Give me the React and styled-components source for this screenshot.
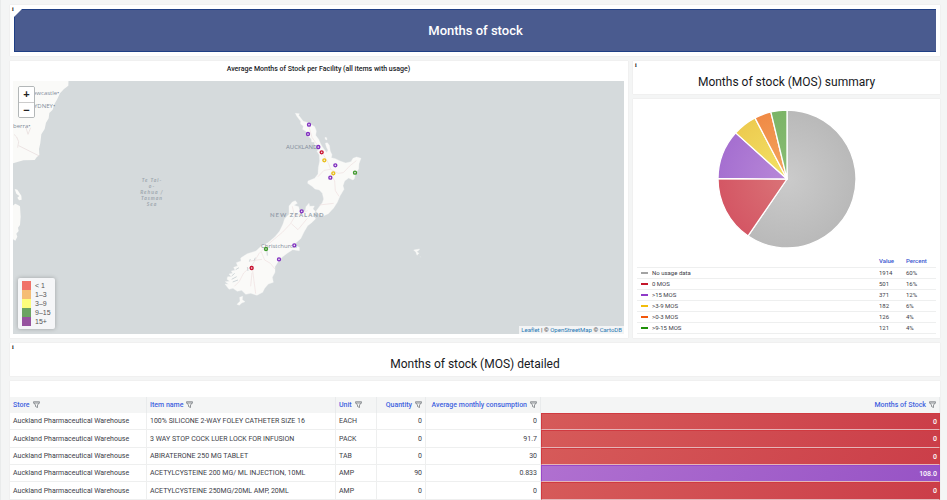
// importing dependencies
import React from 'react'
import styled, { createGlobalStyle } from 'styled-components'

// data
const summary = [
  { label: 'No usage data', value: 1914, percent: '60%', line: '#a3a3a3', inner: '#cbcbcb', outer: '#b9b9b9' },
  { label: '0 MOS', value: 501, percent: '16%', line: '#c4162a', inner: '#da7377', outer: '#d45664' },
  { label: '>15 MOS', value: 371, percent: '12%', line: '#8f3bc8', inner: '#b888d8', outer: '#a56fd0' },
  { label: '>3-9 MOS', value: 182, percent: '6%', line: '#f2bd0b', inner: '#f3e366', outer: '#edcb50' },
  { label: '>0-3 MOS', value: 126, percent: '4%', line: '#f2570c', inner: '#f3a660', outer: '#f08a45' },
  { label: '>9-15 MOS', value: 121, percent: '4%', line: '#1f9108', inner: '#8abd75', outer: '#7bb466' },
]

const columns = [
  { name: 'Store', width: 137 },
  { name: 'Item name', width: 189 },
  { name: 'Unit', width: 41 },
  { name: 'Quantity', width: 49, right: true },
  { name: 'Average monthly consumption', width: 115, right: true },
  { name: 'Months of Stock', right: true },
]

const stock = [
  { item: '100% SILICONE 2-WAY FOLEY CATHETER SIZE 16', unit: 'EACH', quantity: '0', amc: '0', mos: '0' },
  { item: '3 WAY STOP COCK LUER LOCK FOR INFUSION', unit: 'PACK', quantity: '0', amc: '91.7', mos: '0' },
  { item: 'ABIRATERONE 250 MG TABLET', unit: 'TAB', quantity: '0', amc: '30', mos: '0' },
  { item: 'ACETYLCYSTEINE 200 MG/ ML INJECTION, 10ML', unit: 'AMP', quantity: '90', amc: '0.833', mos: '108.0', over: true },
  { item: 'ACETYLCYSTEINE 250MG/20ML AMP, 20ML', unit: 'AMP', quantity: '0', amc: '0', mos: '0' },
]

const ranges = [
  { label: '< 1', color: '#f07168' },
  { label: '1–3', color: '#f5bd74' },
  { label: '3–9', color: '#fdfd7c' },
  { label: '9–15', color: '#6ba362' },
  { label: '15+', color: '#96529f' },
]

const facilities = [
  [267, 104, '#8030c0'],
  [264, 132, '#8030c0'],
  [295, 171, '#8030c0'],
  [305, 187, '#c8102e'],
  [313, 211, '#eabf15'],
  [346, 226, '#8030c0'],
  [340, 250, '#eabf15'],
  [331, 263, '#8030c0'],
  [405, 248, '#3f9a2c'],
  [245, 364, '#8030c0'],
  [223, 466, '#8030c0'],
  [138, 477, '#3f9a2c'],
  [177, 508, '#8030c0'],
  [95, 534, '#c8102e'],
]

// styled components
const GlobalStyle = createGlobalStyle`
  * {
    box-sizing: border-box;
  }

  body {
    margin: 0;
    background-color: #f4f5f5;
    font-family: Roboto, 'Liberation Sans', sans-serif;
    font-size: 7px;
    color: #3c4048;
    overflow: hidden;
  }
`

const Dashboard = styled.main`
  display: flex;
  flex-direction: column;
  gap: 5px;
  padding: 5px 7px 0 9px;
  border-left: 1px solid #e9ebeb;
`

const Columns = styled.div`
  display: grid;
  grid-template-columns: 618fr 307fr;
  gap: 5px;
`

const Side = styled.div`
  display: flex;
  flex-direction: column;
  gap: 5px;
`

const Panel = styled.section`
  position: relative;
  background-color: white;
  box-shadow: 0 0 1px #d8dadc;
`

const Info = styled.span`
  position: absolute;
  z-index: 1;
  top: 0;
  left: 2px;
  font: bold 6px/8px 'Liberation Serif', serif;
  color: #111;
`

const BannerPanel = styled(Panel)`
  padding: 4px;
`

const Banner = styled.h1`
  position: relative;
  margin: 0;
  padding: 11px 0;
  border: 1px solid #1f3f85;
  border-right: none;
  background-color: #4a5b8f;
  color: white;
  font-size: 13px;
  font-weight: 500;
  line-height: 19px;
  text-align: center;

  &::before {
    content: '';
    position: absolute;
    top: -1px;
    left: -1px;
    border: 4px solid transparent;
    border-top-color: white;
    border-left-color: white;
  }
`

const Heading = styled.h2`
  margin: 0;
  padding: 13px 0 4px;
  color: #17191d;
  font-size: 12px;
  font-weight: 400;
  line-height: 16px;
  text-align: center;
`

const MapPanel = styled(Panel)`
  display: flex;
  flex-direction: column;
  padding: 0 4px 4px 3px;
`

const MapTitle = styled.h2`
  margin: 0;
  padding: 2px 0 6px;
  color: #202226;
  font-size: 7px;
  font-weight: 500;
  line-height: 12px;
  text-align: center;
`

const MapArea = styled.div`
  position: relative;
  height: 253px;
  background-color: #d5dadc;
  overflow: hidden;

  svg {
    display: block;
    width: 100%;
    height: 100%;
  }
`

const ZoomControl = styled.div`
  position: absolute;
  top: 5px;
  left: 5px;
  display: flex;
  flex-direction: column;
  border: 1px solid #b3b7b8;
  border-radius: 2px;
  overflow: hidden;
`

const ZoomButton = styled.button`
  width: 15px;
  height: 15px;
  padding: 0;
  border: none;
  background-color: white;
  color: #222;
  font: bold 11px/15px 'Liberation Sans', sans-serif;
  cursor: pointer;

  & + & {
    border-top: 1px solid #ccc;
  }
`

const RangeLegend = styled.ul`
  position: absolute;
  bottom: 5px;
  left: 5px;
  margin: 0;
  padding: 3px 4px;
  list-style: none;
  border-radius: 2px;
  background-color: #f5f6f8;
  box-shadow: 0 0 4px rgb(0 0 0 / 25%);
  color: #555;
  font-family: 'Liberation Sans', sans-serif;

  li {
    display: flex;
    gap: 4px;
    line-height: 9px;
  }
`

const RangeSwatch = styled.i`
  width: 9px;
  height: 9px;
  background-color: ${(props) => props.$color};
`

const Attribution = styled.div`
  position: absolute;
  right: 0;
  bottom: 0;
  padding: 0 2px;
  background-color: rgb(255 255 255 / 70%);
  color: #333;
  font-size: 6px;
  line-height: 8px;

  a {
    color: #1f78b4;
    text-decoration: none;
  }
`

const PiePanel = styled(Panel)`
  flex: 1;
  padding: 10px 4px 4px;
`

const PieChart = styled.svg`
  display: block;
  width: 140px;
  height: 140px;
  margin: 0 auto 7px;
`

const SummaryTable = styled.table`
  width: 100%;
  table-layout: fixed;
  border-collapse: collapse;
  font-size: 6px;
  line-height: 10px;

  th,
  td {
    height: 11px;
    padding: 0;
    border-bottom: 1px solid #eeefef;
    text-align: left;
  }

  th {
    color: #3a56cf;
    font-weight: 500;
  }

  th:first-child,
  td:first-child {
    padding-left: 4px;
  }

  th:nth-child(2) {
    width: 27px;
  }

  th:nth-child(3) {
    width: 30px;
  }
`

const SeriesLine = styled.i`
  display: inline-block;
  width: 7px;
  height: 2px;
  margin-right: 4px;
  vertical-align: 1px;
  background-color: ${(props) => props.$color};
`

const TablePanel = styled(Panel)`
  padding-top: 16px;
`

const StockTable = styled.table`
  width: 100%;
  table-layout: fixed;
  border-collapse: separate;
  border-spacing: 0;
  line-height: 10px;
  white-space: nowrap;

  tbody tr {
    height: 17px;
  }

  tbody tr:nth-child(3n + 2) {
    height: 18px;
  }
`

const HeaderCell = styled.th`
  width: ${(props) => (props.$width ? `${props.$width}px` : 'auto')};
  height: 16px;
  padding: 0 3px;
  border-right: 1px solid #e9ebec;
  background-color: #f4f5f5;
  color: #4263e0;
  font-weight: 500;
  text-align: ${(props) => (props.$right ? 'right' : 'left')};

  svg {
    width: 7px;
    height: 7px;
    margin-left: 3px;
    vertical-align: -1px;
  }
`

const Cell = styled.td`
  padding: 0 3px;
  border-right: 1px solid #eeefef;
  border-bottom: 1px solid #eeefef;
  text-align: ${(props) => (props.$right ? 'right' : 'left')};
`

const MosCell = styled(Cell)`
  border: 1px solid ${(props) => (props.$over ? '#9a48c8' : '#d03a40')};
  border-bottom-color: #e5b5b8;
  background: ${(props) =>
    props.$over ? 'linear-gradient(120deg, #b070d0, #9753c5)' : 'linear-gradient(120deg, #d65a59, #cb3e49)'};
  color: white;
  font-weight: 500;
  padding-right: 2px;
`

function FilterIcon() {
  return (
    <svg viewBox="0 0 14 14" fill="none" stroke="#777b80" strokeWidth="1.6" strokeLinejoin="round">
      <path d="M1 1.5h12v1.8L9 8v5l-4-2V8L1 3.300zM1 4h12" />
    </svg>
  )
}

function Pie() {
  const total = summary.reduce((sum, row) => sum + row.value, 0)
  let start = 0
  const point = (part) => {
    const angle = part * 2 * Math.PI
    return `${70 + 69 * Math.sin(angle)} ${70 - 69 * Math.cos(angle)}`
  }

  return (
    <PieChart viewBox="0 0 140 140" role="img" aria-label="Months of stock">
      {summary.map((row, index) => {
        const end = start + row.value / total
        const d = `M70 70L${point(start)}A69 69 0 ${end - start > 0.5 ? 1 : 0} 1 ${point(end)}Z`
        start = end
        return (
          <g key={row.label}>
            <radialGradient id={`slice${index}`} gradientUnits="userSpaceOnUse" cx="70" cy="70" r="69">
              <stop offset="0" stopColor={row.inner} />
              <stop offset="1" stopColor={row.outer} />
            </radialGradient>
            <path d={d} fill={`url(#slice${index})`} stroke="white" strokeWidth="1.300" strokeLinejoin="round" />
          </g>
        )
      })}
    </PieChart>
  )
}

function Facilities() {
  return (
    <svg viewBox="13 81 611 253" preserveAspectRatio="xMidYMid slice">
      {/* Australia and Tasmania */}
      <g transform="translate(0 75) scale(0.33333)" fill="#fafaf8">
        <path d="M0 0H206L205 32L192 42L180 55L172 72L163 88L158 104L148 114L146 130L138 143L134 162L124 178L121 204L117 222L118 240L110 247L104 255L70 256L42 264L0 270Z" />
        <path d="M44 342L52 344L58 353L64 362L65 374L57 376L52 368L58 363L49 356ZM38 392L46 386L54 390L60 394L62 425L60 450L54 458L56 468L49 476L52 485L46 497L38 492Z" />
        <path d="M42 178L50 186L56 200L53 218M56 212L118 243M78 158L84 178L92 158" fill="none" stroke="#e6dada" strokeWidth="2" />
      </g>
      {/* New Zealand */}
      <g transform="translate(220 90) scale(0.33333)">
        <g fill="#fafaf8" stroke="#fafaf8" strokeWidth="1" strokeLinejoin="round">
          <path d="M226 70L238 71L236 76L250 94L260 97L268 100L277 106L284 110L289 123L287 136L296 148L301 160L307 170L314 180L320 188L324 181L319 170L316 160L322 158L328 166L331 184L336 194L334 203L346 206L360 213L377 219L393 215L399 205L410 201L423 205L417 221L416 237L407 249L403 266L399 270L386 264L374 273L369 287L372 298L360 318L352 337L341 354L325 371L308 379L296 371L288 364L298 350L307 338L311 327L307 310L298 300L285 297L276 289L263 280L264 273L284 265L294 252L295 233L299 213L298 195L291 184L296 178L284 164L283 156L275 156L274 147L262 136L258 124L248 118L250 108L242 102L242 94L230 78Z" />
          <path d="M315 142L320 143L321 150L316 148Z" />
          <path d="M207 348L217 336L226 332L232 340L222 346L236 350L238 361L247 367L256 362L258 350L267 340L269 349L283 348L279 357L286 364L281 377L287 386L274 399L263 407L252 426L242 446L228 458L222 465L238 472L238 482L218 479L204 488L188 500L174 515L165 530L165 547L157 562L160 577L145 582L134 595L128 607L111 616L92 610L77 613L65 601L52 604L39 595L27 598L15 582L26 583L16 575L29 574L21 568L23 560L34 560L27 552L38 550L34 543L45 541L41 532L53 528L49 518L63 513L62 504L82 491L108 483L124 468L143 459L165 440L179 423L189 402L194 386L207 373Z" />
          <path d="M59 622L68 619L67 629L75 635L65 639L58 646L51 643L60 634Z" />
          <path d="M581 480L599 477L595 482L590 485L597 490L591 496L588 487ZM601 499L602 502" />
        </g>
        <path
          d="M267 111L276 142L295 169M308 190L326 221L332 238L312 241L294 260M332 238L355 250L370 248L389 228L409 212M332 251L344 273L346 302L357 319M298 345L341 340M217 349L224 380L211 402L187 427L142 465L117 491L96 526L102 573L107 611M226 378L263 362M214 401L234 419L262 385M124 486L134 510L151 520L165 537M96 526L71 549L58 574L43 589M126 508L91 513M96 548L92 589"
          fill="none"
          stroke="#eee0df"
          strokeWidth="2"
        />
        <path d="M35 558L44 550M35 568L50 560M38 576L54 570M47 539L57 533M82 531L84 543M91 507L88 515M102 512L106 503M141 483L142 497M334 250L340 257" fill="none" stroke="#cfd6d9" strokeWidth="3" />
      </g>
      <g fill="#7f8b99" fontFamily="'Open Sans', sans-serif" fontSize="6">
        <text x="33" y="95">ewcastle•</text>
        <text x="34" y="108">YDNEY•</text>
        <text x="13" y="128">berra•</text>
        <text x="286" y="149">AUCKLAND</text>
        <text x="261" y="248">Christchurch</text>
        <text x="270" y="217" fontFamily="Lato, sans-serif" fontSize="6" fontWeight="700" letterSpacing="1" fill="#98a1ac">
          NEW ZEALAND
        </text>
      </g>
      <g fill="#9fa8af" fontFamily="Lato, sans-serif" fontSize="5" fontWeight="700" fontStyle="italic" letterSpacing="1" textAnchor="middle">
        <text x="152" y="182">Te Tai-</text>
        <text x="152" y="188">o-</text>
        <text x="152" y="194">Rehua /</text>
        <text x="152" y="200">Tasman</text>
        <text x="152" y="206">Sea</text>
      </g>
      <g transform="translate(220 90) scale(0.33333)">
        {facilities.map(([x, y, color]) => (
          <circle key={`${x}-${y}`} cx={x} cy={y} r="4.500" fill="#efe6f0" stroke={color} strokeWidth="4" />
        ))}
      </g>
    </svg>
  )
}

export default function App() {
  return (
    <>
      <GlobalStyle />
      <Dashboard>
        <BannerPanel>
          <Info>i</Info>
          <Banner>Months of stock</Banner>
        </BannerPanel>

        <Columns>
          <MapPanel>
            <MapTitle>Average Months of Stock per Facility (all items with usage)</MapTitle>
            <MapArea>
              <Facilities />
              <ZoomControl>
                <ZoomButton aria-label="Zoom in">+</ZoomButton>
                <ZoomButton aria-label="Zoom out">−</ZoomButton>
              </ZoomControl>
              <RangeLegend>
                {ranges.map((range) => (
                  <li key={range.label}>
                    <RangeSwatch $color={range.color} />
                    {range.label}
                  </li>
                ))}
              </RangeLegend>
              <Attribution>
                <a href="#leaflet">Leaflet</a> | © <a href="#osm">OpenStreetMap</a> © <a href="#carto">CartoDB</a>
              </Attribution>
            </MapArea>
          </MapPanel>

          <Side>
            <Panel>
              <Info>i</Info>
              <Heading>Months of stock (MOS) summary</Heading>
            </Panel>
            <PiePanel>
              <Pie />
              <SummaryTable>
                <thead>
                  <tr>
                    <th aria-label="Series" />
                    <th>Value</th>
                    <th>Percent</th>
                  </tr>
                </thead>
                <tbody>
                  {summary.map((row) => (
                    <tr key={row.label}>
                      <td>
                        <SeriesLine $color={row.line} />
                        {row.label}
                      </td>
                      <td>{row.value}</td>
                      <td>{row.percent}</td>
                    </tr>
                  ))}
                </tbody>
              </SummaryTable>
            </PiePanel>
          </Side>
        </Columns>

        <Panel>
          <Info>i</Info>
          <Heading>Months of stock (MOS) detailed</Heading>
        </Panel>

        <TablePanel>
          <StockTable>
            <thead>
              <tr>
                {columns.map((column) => (
                  <HeaderCell key={column.name} $width={column.width} $right={column.right}>
                    {column.name}
                    <FilterIcon />
                  </HeaderCell>
                ))}
              </tr>
            </thead>
            <tbody>
              {stock.map((row) => (
                <tr key={row.item}>
                  <Cell>Auckland Pharmaceutical Warehouse</Cell>
                  <Cell>{row.item}</Cell>
                  <Cell>{row.unit}</Cell>
                  <Cell $right>{row.quantity}</Cell>
                  <Cell $right>{row.amc}</Cell>
                  <MosCell $right $over={row.over}>
                    {row.mos}
                  </MosCell>
                </tr>
              ))}
            </tbody>
          </StockTable>
        </TablePanel>
      </Dashboard>
    </>
  )
}
